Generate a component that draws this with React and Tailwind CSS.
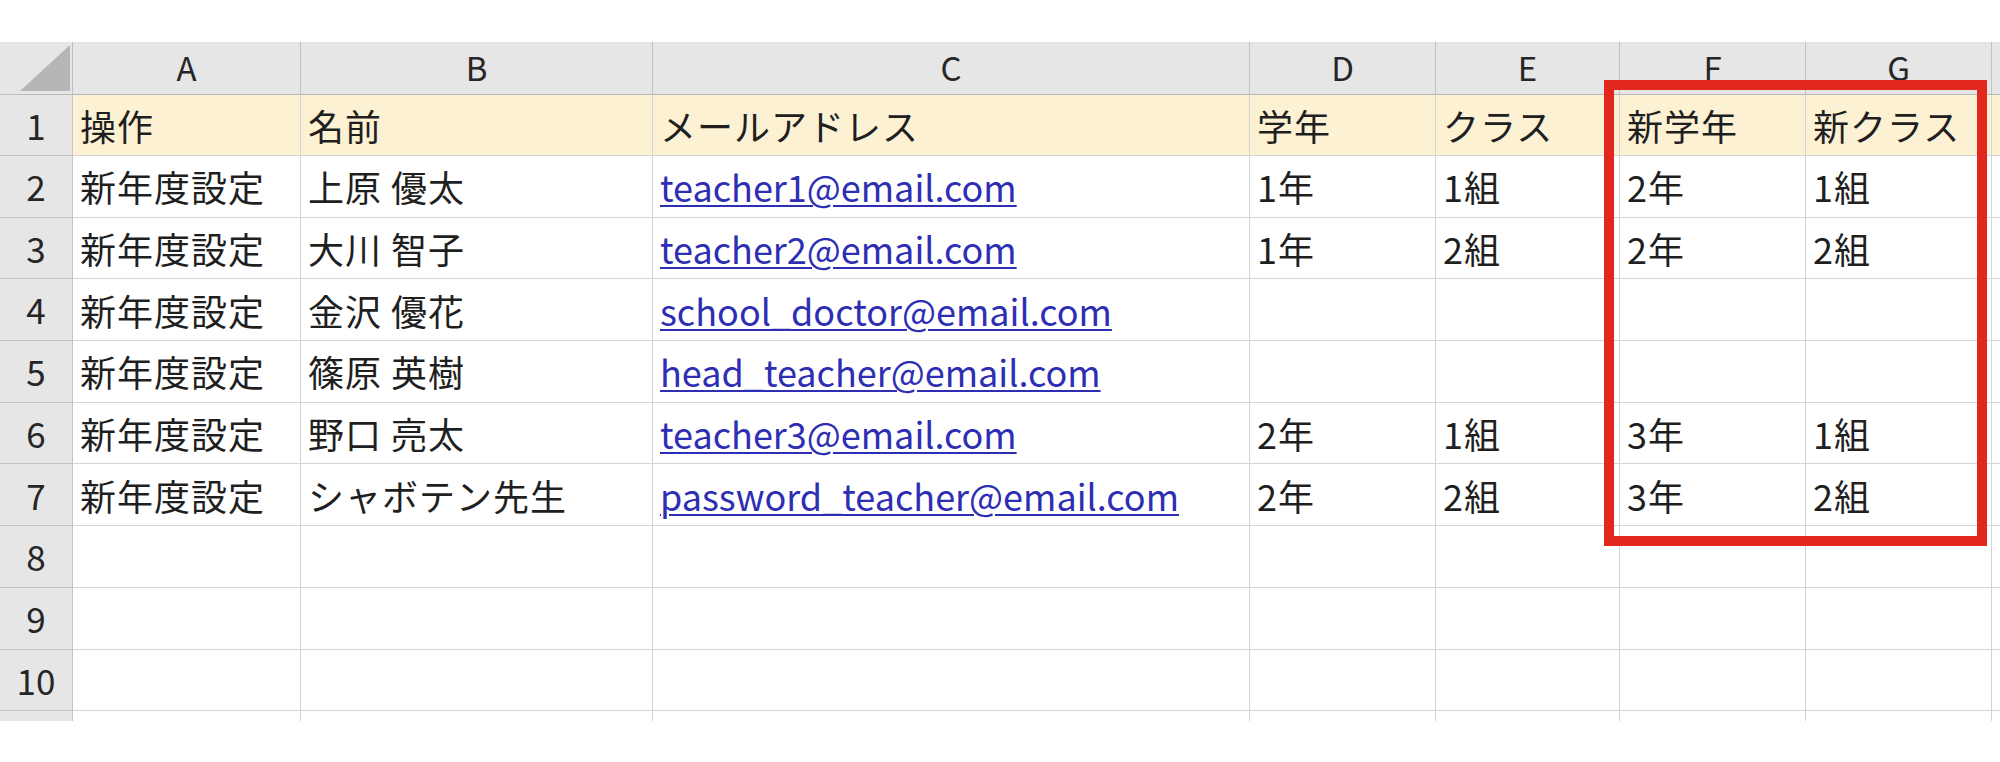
import React from "react";

const columns = [
  { key: "A", width: "w-[228px]" },
  { key: "B", width: "w-[352px]" },
  { key: "C", width: "w-[597px]" },
  { key: "D", width: "w-[186px]" },
  { key: "E", width: "w-[184px]" },
  { key: "F", width: "w-[186px]" },
  { key: "G", width: "w-[186px]" },
  { key: "", width: "w-[40px]" }, // next column, only a sliver is visible
];

const header = ["操作", "名前", "メールアドレス", "学年", "クラス", "新学年", "新クラス", ""];

const rows = [
  ["新年度設定", "上原 優太", "teacher1@email.com", "1年", "1組", "2年", "1組"],
  ["新年度設定", "大川 智子", "teacher2@email.com", "1年", "2組", "2年", "2組"],
  ["新年度設定", "金沢 優花", "school_doctor@email.com", "", "", "", ""],
  ["新年度設定", "篠原 英樹", "head_teacher@email.com", "", "", "", ""],
  ["新年度設定", "野口 亮太", "teacher3@email.com", "2年", "1組", "3年", "1組"],
  ["新年度設定", "シャボテン先生", "password_teacher@email.com", "2年", "2組", "3年", "2組"],
  [],
  [],
  [],
];

const font = { fontFamily: '"Noto Sans CJK JP", "Noto Sans", sans-serif' };

const Cell = ({ width, bg = "bg-white", children }) => (
  <div
    className={`${width} shrink-0 ${bg} border-r border-b border-[#d4d4d4] pl-[7px] flex items-center overflow-hidden whitespace-nowrap`}
  >
    {children}
  </div>
);

const RowHead = ({ children, h }) => (
  <div
    className={`w-[73px] ${h} shrink-0 bg-[#e6e6e6] border-r border-b border-[#c6c6c6] flex items-center justify-center text-[35px] text-[#262626]`}
  >
    {children}
  </div>
);

export default function App() {
  return (
    <div className="w-[2000px] h-[762px] bg-white pt-[42px] relative overflow-hidden" style={font}>
      <div className="h-[679px] overflow-hidden">
        {/* column header row */}
        <div className="flex h-[53px]">
          <div className="w-[73px] shrink-0 bg-[#e6e6e6] border-r border-b border-[#bdbdbd] relative">
            <svg className="absolute left-0 top-0" width="73" height="53">
              <polygon points="20,49 70,49 70,3" fill="#b6b6b6" />
            </svg>
          </div>
          {columns.map((c, i) => (
            <div
              key={i}
              className={`${c.width} shrink-0 bg-[#e6e6e6] border-r border-b border-[#c2c2c2] border-b-[#b8b8b8] flex items-center justify-center text-[33px] text-[#262626]`}
            >
              {c.key}
            </div>
          ))}
        </div>

        {/* row 1 : titles */}
        <div className="flex h-[61px] text-[36px] text-[#1f1f1f]">
          <RowHead h="h-[61px]">1</RowHead>
          {columns.map((c, i) => (
            <Cell key={i} width={c.width} bg="bg-[#fcf1d3]">
              <span className="tracking-[1px]">{header[i]}</span>
            </Cell>
          ))}
        </div>

        {/* data rows */}
        {rows.map((r, ri) => (
          <div key={ri} className="flex h-[61.7px] text-[36px] text-[#1f1f1f]">
            <RowHead h="h-[61.7px]">{ri + 2}</RowHead>
            {columns.map((c, i) => (
              <Cell key={i} width={c.width}>
                {i === 2 && r[i] ? (
                  <span className="text-[#2e2eb4] underline decoration-[2px] underline-offset-[3px]">
                    {r[i]}
                  </span>
                ) : (
                  <span className="tracking-[1px]">{r[i] || ""}</span>
                )}
              </Cell>
            ))}
          </div>
        ))}

        {/* row 11, cut off by the bottom of the view */}
        <div className="flex h-[61.7px]">
          <RowHead h="h-[61.7px]" />
          {columns.map((c, i) => (
            <Cell key={i} width={c.width} />
          ))}
        </div>
      </div>

      {/* highlight box around the new grade / class columns */}
      <div className="absolute left-[1604px] top-[80px] w-[383px] h-[466px] border-[10px] border-[#e2281e]" />
    </div>
  );
}
